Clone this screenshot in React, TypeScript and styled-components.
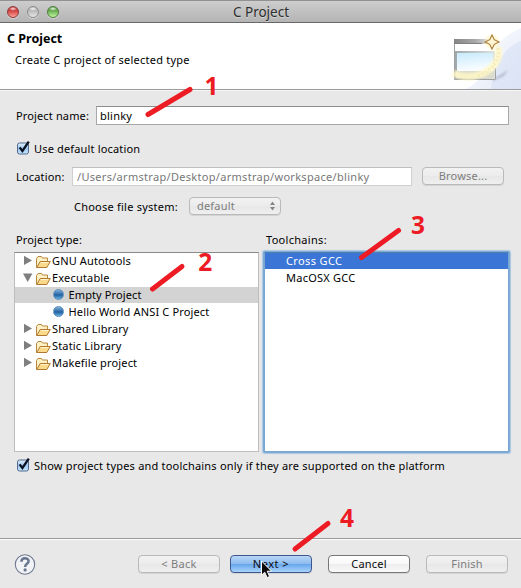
import React from 'react';
import styled, { createGlobalStyle } from 'styled-components';

const Global = createGlobalStyle`
  * { box-sizing: border-box; }
  body { margin: 0; overflow: hidden; background: #e8e8e8; }
`;

const Dialog = styled.main`
  position: relative;
  display: flex;
  flex-direction: column;
  width: 521px;
  height: 588px;
  overflow: hidden;
  background: #e8e8e8;
  color: #000;
  font: 11px/17px "Noto Sans", "Open Sans", sans-serif;
  white-space: nowrap;
`;

/* Text run with its own tracking. */
const Text = styled.span<{ $track?: number }>`
  letter-spacing: ${p => p.$track ?? 0.1}px;
`;

const TitleBar = styled.header`
  display: grid;
  grid-template-columns: 80px 1fr 80px;
  flex: none;
  height: 23px;
  border-top: 1px solid #929292;
  border-bottom: 1px solid #686868;
  background: linear-gradient(#cdcdcd, #b4b4b4);
`;

const Lights = styled.div`
  display: flex;
  gap: 8px;
  padding: 5px 0 0 7px;
`;

const Light = styled.i<{ $edge: string; $from: string; $to: string }>`
  width: 12px;
  height: 12px;
  border: 1px solid ${p => p.$edge};
  border-radius: 50%;
  background:
    radial-gradient(ellipse 4px 2px at 50% 18%, rgba(255, 255, 255, 0.85), rgba(255, 255, 255, 0) 100%),
    linear-gradient(${p => p.$from} 35%, ${p => p.$to});
  box-shadow: 0 1px 0 rgba(255, 255, 255, 0.4);
`;

const WindowTitle = styled.h1`
  margin: 0 0 0 1px;
  text-align: center;
  font-size: 13.5px;
  font-weight: 400;
  line-height: 22px;
  color: #2d2d2d;
  text-shadow: 0 1px 0 rgba(255, 255, 255, 0.4);
`;

const Banner = styled.section`
  display: flex;
  justify-content: space-between;
  flex: none;
  height: 67px;
  border-bottom: 1px solid #9b9b9b;
  background: #fff;
`;

const BannerText = styled.div`
  padding: 7px 0 0 7px;
`;

const BannerTitle = styled.h2`
  margin: 0;
  font-size: 12.5px;
  line-height: 17px;
  color: #000;
`;

const BannerNote = styled.p`
  margin: 4px 0 0 8px;
`;

const Body = styled.section`
  flex: none;
  height: 448px;
  padding: 15px 12px 0 14px;
  border-top: 1px solid #f6f6f6;
`;

const FormRow = styled.div<{ $indent?: number; $top?: number; $height?: number }>`
  display: flex;
  align-items: center;
  height: ${p => p.$height ?? 20}px;
  margin-top: ${p => p.$top ?? 0}px;
  padding-left: ${p => p.$indent ?? 2}px;
`;

const Label = styled.label<{ $width: number; $track: number }>`
  flex: none;
  width: ${p => p.$width}px;
  letter-spacing: ${p => p.$track}px;
`;

const Field = styled.div<{ $width: number; $disabled?: boolean }>`
  flex: none;
  width: ${p => p.$width}px;
  height: 19px;
  padding-left: ${p => (p.$disabled ? 4 : 3)}px;
  border: 1px solid ${p => (p.$disabled ? '#cfcfcf' : '#a8a8a8')};
  border-top-color: ${p => (p.$disabled ? '#bfbfbf' : '#8c8c8c')};
  background: #fff;
  color: ${p => (p.$disabled ? '#777' : '#000')};
  line-height: 17px;
`;

const Button = styled.button<{ $kind?: 'disabled' | 'default'; $width?: number }>`
  display: flex;
  align-items: center;
  justify-content: center;
  flex: none;
  width: ${p => p.$width ?? 82}px;
  height: 18px;
  padding: 0;
  border: 1px solid ${p => (p.$kind === 'disabled' ? '#b9b9b9' : p.$kind === 'default' ? '#40568f' : '#777')};
  border-radius: 4px;
  background: ${p =>
    p.$kind === 'disabled'
      ? 'linear-gradient(#f2f2f2, #ececec 50%, #e7e7e7 51%, #efefef)'
      : p.$kind === 'default'
        ? 'linear-gradient(#b9d7f6, #8dbcf0 49%, #67a5ec 51%, #a8d4fa)'
        : 'linear-gradient(#fff, #f8f8f8 49%, #ededed 51%, #fafafa)'};
  box-shadow: 0 1px 0 rgba(150, 150, 150, 0.25);
  color: ${p => (p.$kind === 'disabled' ? '#7d7d7d' : '#0b0b0b')};
  font: inherit;
  line-height: 16px;
`;

const Select = styled(Button)`
  justify-content: space-between;
  padding: 0 4px 0 7px;
`;

const BrowseButton = styled(Button)`
  align-self: flex-start;
  margin-left: 10px;
`;

const CheckBox = styled.span`
  flex: none;
  width: 15px;
  height: 15px;
  margin-right: 3px;
  svg { display: block; overflow: visible; }
`;

const ListTitles = styled.div`
  display: grid;
  grid-template-columns: 250px 1fr;
  height: 17px;
  margin-top: 16px;
  padding-left: 2px;
`;

const Lists = styled.div`
  display: flex;
  gap: 5px;
  margin-top: 4px;
`;

const ListBox = styled.ul<{ $focused?: boolean }>`
  width: 245px;
  height: 200px;
  margin: 0;
  padding: 0;
  list-style: none;
  border: 1px solid ${p => (p.$focused ? '#79a7d0' : '#bdbdbd')};
  border-top-color: ${p => (p.$focused ? '#4f81ad' : '#8a8a8a')};
  border-radius: ${p => (p.$focused ? 1 : 0)}px;
  background: #fff;
  box-shadow: ${p => (p.$focused ? '0 0 0 1px #7eabd6, 0 0 1px 2px rgba(139, 181, 224, 0.65)' : 'none')};
`;

const Item = styled.li<{ $selected?: 'plain' | 'focus'; $indent?: number }>`
  display: flex;
  align-items: center;
  height: 16px;
  margin-bottom: 1px;
  padding-left: ${p => p.$indent ?? 8}px;
  background: ${p => (p.$selected === 'focus' ? '#3b75d6' : p.$selected ? '#d3d3d3' : 'transparent')};
  color: ${p => (p.$selected === 'focus' ? '#fff' : '#000')};
  line-height: 16px;
`;

const Dot = styled.i`
  width: 11px;
  height: 11px;
  margin: 0 5px 2px 0;
  border: 1px solid #5b8fbd;
  border-radius: 50%;
  background: linear-gradient(#7fb0da, #2e6ca8 48%, #1f609f 55%, #67b0e0);
`;

const Twisty = styled.svg`
  flex: none;
  width: 10px;
  height: 12px;
  margin-right: 1.5px;
`;

const FolderSvg = styled.svg`
  flex: none;
  width: 16px;
  height: 14px;
  margin: 1px 1.5px 0 0;
`;

const Footer = styled.footer`
  display: flex;
  align-items: flex-start;
  flex: 1;
  padding: 15px 13px 0 14px;
  border-top: 1px solid #9a9a9a;
  box-shadow: inset 0 1px 0 #fbfbfb;
`;

const Buttons = styled.div`
  display: grid;
  grid-template-columns: 82px 82px 82px 82px;
  column-gap: 10px;
  margin: 1px 0 0 102px;
  & > :nth-child(3) { margin-left: 6px; }
  & > :nth-child(4) { margin-left: 12px; }
`;

/* Hand-drawn step marks laid over the dialog. */
const Marks = styled.svg`
  position: absolute;
  inset: 0;
  pointer-events: none;
`;

const StepNumber = styled.text`
  font: 700 24.5px "Noto Sans", sans-serif;
  fill: #ed1c24;
`;

function Check() {
  return (
    <CheckBox>
      <svg width="15" height="15" viewBox="0 0 15 15">
        <defs>
          <linearGradient id="box" x1="0" y1="0" x2="0" y2="1">
            <stop offset="0" stopColor="#e3f0fd" />
            <stop offset=".5" stopColor="#9fc8f2" />
            <stop offset="1" stopColor="#c4e6fd" />
          </linearGradient>
        </defs>
        <rect x="1.5" y="2" width="11" height="11" rx="2" fill="url(#box)" stroke="#53698f" />
        <path d="M3.6 6.4 6.4 10 12.8 0.6" fill="none" stroke="#0c1222" strokeWidth="2.3" />
      </svg>
    </CheckBox>
  );
}

function Folder() {
  return (
    <FolderSvg viewBox="0 0 16 14">
      <path d="M1.5 12.5V3.5L3 1.5H6.5L7.5 3H12.5V6" fill="#fdf0c4" stroke="#b8873d" />
      <path d="M1.7 12.5 5.2 6.5H15.3L11.8 12.5Z" fill="#fbd98a" stroke="#b07830" strokeLinejoin="round" />
      <path d="M5.8 7.6H13.4" stroke="#fff3c9" />
    </FolderSvg>
  );
}

function Branch({ name, track, open }: { name: string; track: number; open?: boolean }) {
  return (
    <Item>
      <Twisty viewBox="0 0 10 12">
        <path d={open ? 'M0 1.5H9.4L4.7 10Z' : 'M1 0.8 9 5.4 1 10Z'} fill="#7f7f7f" />
      </Twisty>
      <Folder />
      <Text $track={track}>{name}</Text>
    </Item>
  );
}

function WizardArt() {
  return (
    <svg width="81" height="66" viewBox="440 23 81 66">
      <defs>
        <linearGradient id="swoosh" x1="0" y1="0" x2="1" y2="1">
          <stop offset="0" stopColor="#ffffff" />
          <stop offset="1" stopColor="#d2dcf3" />
        </linearGradient>
        <linearGradient id="bar" x1="0" y1="0" x2="1" y2="0">
          <stop offset="0" stopColor="#858585" />
          <stop offset=".6" stopColor="#a9a9a9" />
          <stop offset="1" stopColor="#e3e3e3" />
        </linearGradient>
        <linearGradient id="frame" x1="0" y1="0" x2="1" y2="0">
          <stop offset="0" stopColor="#9fa9ab" />
          <stop offset="1" stopColor="#dfe3e0" />
        </linearGradient>
        <linearGradient id="pane" x1="0" y1="0" x2=".2" y2="1">
          <stop offset="0" stopColor="#c8ebfd" />
          <stop offset="1" stopColor="#fafdff" />
        </linearGradient>
        <filter id="soft" x="-30%" y="-30%" width="160%" height="160%">
          <feGaussianBlur stdDeviation="1.3" />
        </filter>
      </defs>
      <path d="M521 28C500 37 490 52 486 68Q480 82 466 89H521Z" fill="url(#swoosh)" opacity=".65" />
      <path d="M521 41C506 47 496 60 491 89H521Z" fill="#d4def4" opacity=".5" />
      <path d="M492 80 508 70 504 76 493 81Z" fill="#9aa2b8" opacity=".6" filter="url(#soft)" />
      <rect x="454" y="39" width="42" height="41" fill="#fff" />
      <path d="M454.5 44V79.5H495.5V68" fill="none" stroke="#a0a0a0" />
      <rect x="454" y="39" width="36" height="5" fill="url(#bar)" />
      <path d="M454 43.5H482" stroke="#808080" />
      <rect x="455" y="51" width="40" height="28" fill="url(#frame)" />
      <rect x="457" y="53" width="36" height="18" fill="url(#pane)" />
      <rect x="456" y="71" width="38" height="7" fill="#dcdccd" />
      <path d="M453 73Q466 80 482 74Q502 64 498 47" fill="none" stroke="#fff8c8" strokeWidth="7" opacity=".85" filter="url(#soft)" />
      <path d="M478 76Q502 66 498 46" fill="none" stroke="#f4e0a8" strokeWidth="3" strokeDasharray="1.5 2.5" opacity=".55" />
      <circle cx="492" cy="42" r="7" fill="#fff5c4" opacity=".7" filter="url(#soft)" />
      <path d="M492 35 494.3 39.7 499 42 494.3 44.3 492 49 489.7 44.3 485 42 489.7 39.7Z" fill="#fff5d2" stroke="#a77b38" strokeWidth="1.1" />
    </svg>
  );
}

function HelpIcon() {
  return (
    <svg width="22" height="22" viewBox="0 0 22 22">
      <circle cx="11" cy="10.5" r="9.7" fill="#f1f2f5" stroke="#6d7890" strokeWidth="1.1" />
      <path d="M7.4 7.7C7.5 3.2 14.6 3.3 14.6 7.3C14.6 10 11.1 9.7 11.1 12.9" fill="none" stroke="#68758f" strokeWidth="2.5" />
      <circle cx="11.1" cy="15.9" r="1.6" fill="#68758f" />
    </svg>
  );
}

const steps = [
  { n: 1, x: 204.5, y: 95, line: 'M148 114.5 190 89.5' },
  { n: 2, x: 198.2, y: 271, line: 'M152.5 289 182 266.5' },
  { n: 3, x: 411, y: 234, line: 'M361.5 257.5 398.5 230.5' },
  { n: 4, x: 340, y: 527, line: 'M295 549 328 523.5' },
];

export default function App() {
  return (
    <>
      <Global />
      <Dialog>
        <TitleBar>
          <Lights>
            <Light $edge="#8d3b3b" $from="#cf3f3e" $to="#ff9f98" />
            <Light $edge="#8b8b8b" $from="#b9b9b9" $to="#e6e6e6" />
            <Light $edge="#4d7a3d" $from="#66a850" $to="#c0f99c" />
          </Lights>
          <WindowTitle>C Project</WindowTitle>
        </TitleBar>

        <Banner>
          <BannerText>
            <BannerTitle>C Project</BannerTitle>
            <BannerNote><Text $track={0.24}>Create C project of selected type</Text></BannerNote>
          </BannerText>
          <WizardArt />
        </Banner>

        <Body>
          <FormRow $height={19}>
            <Label $width={80} $track={0.14}>Project name:</Label>
            <Field $width={413}><Text $track={0.25}>blinky</Text></Field>
          </FormRow>
          <FormRow $top={13}>
            <Check />
            <Text $track={0.16}>Use default location</Text>
          </FormRow>
          <FormRow $top={9} $height={19}>
            <Label $width={56} $track={0.16}>Location:</Label>
            <Field $width={340} $disabled>
              <Text $track={0.3}>/Users/armstrap/Desktop/armstrap/workspace/blinky</Text>
            </Field>
            <BrowseButton $kind="disabled"><Text $track={0.2}>Browse...</Text></BrowseButton>
          </FormRow>
          <FormRow $top={11} $indent={60} $height={18}>
            <Label $width={115} $track={0.23}>Choose file system:</Label>
            <Select $kind="disabled" $width={92}>
              <Text $track={0.2}>default</Text>
              <svg width="7" height="10" viewBox="0 0 7 10">
                <path d="M3.5 0.5 6 4H1ZM3.5 9.5 1 6H6Z" fill="#858585" />
              </svg>
            </Select>
          </FormRow>

          <ListTitles>
            <Text $track={0.13}>Project type:</Text>
            <Text $track={0.3}>Toolchains:</Text>
          </ListTitles>
          <Lists>
            <ListBox>
              <Branch name="GNU Autotools" track={0.13} />
              <Branch name="Executable" track={0.18} open />
              <Item $selected="plain" $indent={37.5}><Dot /><Text $track={0.12}>Empty Project</Text></Item>
              <Item $indent={37.5}><Dot /><Text $track={0.15}>Hello World ANSI C Project</Text></Item>
              <Branch name="Shared Library" track={0.1} />
              <Branch name="Static Library" track={0.17} />
              <Branch name="Makefile project" track={0.15} />
            </ListBox>
            <ListBox $focused>
              <Item $selected="focus" $indent={21}><Text $track={0.38}>Cross GCC</Text></Item>
              <Item $indent={21}><Text $track={0.24}>MacOSX GCC</Text></Item>
            </ListBox>
          </Lists>
          <FormRow $top={3}>
            <Check />
            <Text $track={0.2}>Show project types and toolchains only if they are supported on the platform</Text>
          </FormRow>
        </Body>

        <Footer>
          <HelpIcon />
          <Buttons>
            <Button $kind="disabled"><Text $track={0.3}>&lt; Back</Text></Button>
            <Button $kind="default"><Text $track={0.5}>Next &gt;</Text></Button>
            <Button><Text $track={0.2}>Cancel</Text></Button>
            <Button $kind="disabled"><Text $track={0.2}>Finish</Text></Button>
          </Buttons>
        </Footer>

        <Marks width="521" height="588" viewBox="0 0 521 588">
          <path d="M261.5 561V575.2L264.7 572.2 267.1 577.6 269.6 576.5 267.2 571.2H271.6Z" fill="#0a0a0a" stroke="#fff" strokeWidth="1" />
          {steps.map(s => (
            <g key={s.n}>
              <path d={s.line} stroke="#ed1c24" strokeWidth="5" strokeLinecap="round" />
              <StepNumber x={s.x} y={s.y}>{s.n}</StepNumber>
            </g>
          ))}
        </Marks>
      </Dialog>
    </>
  );
}
